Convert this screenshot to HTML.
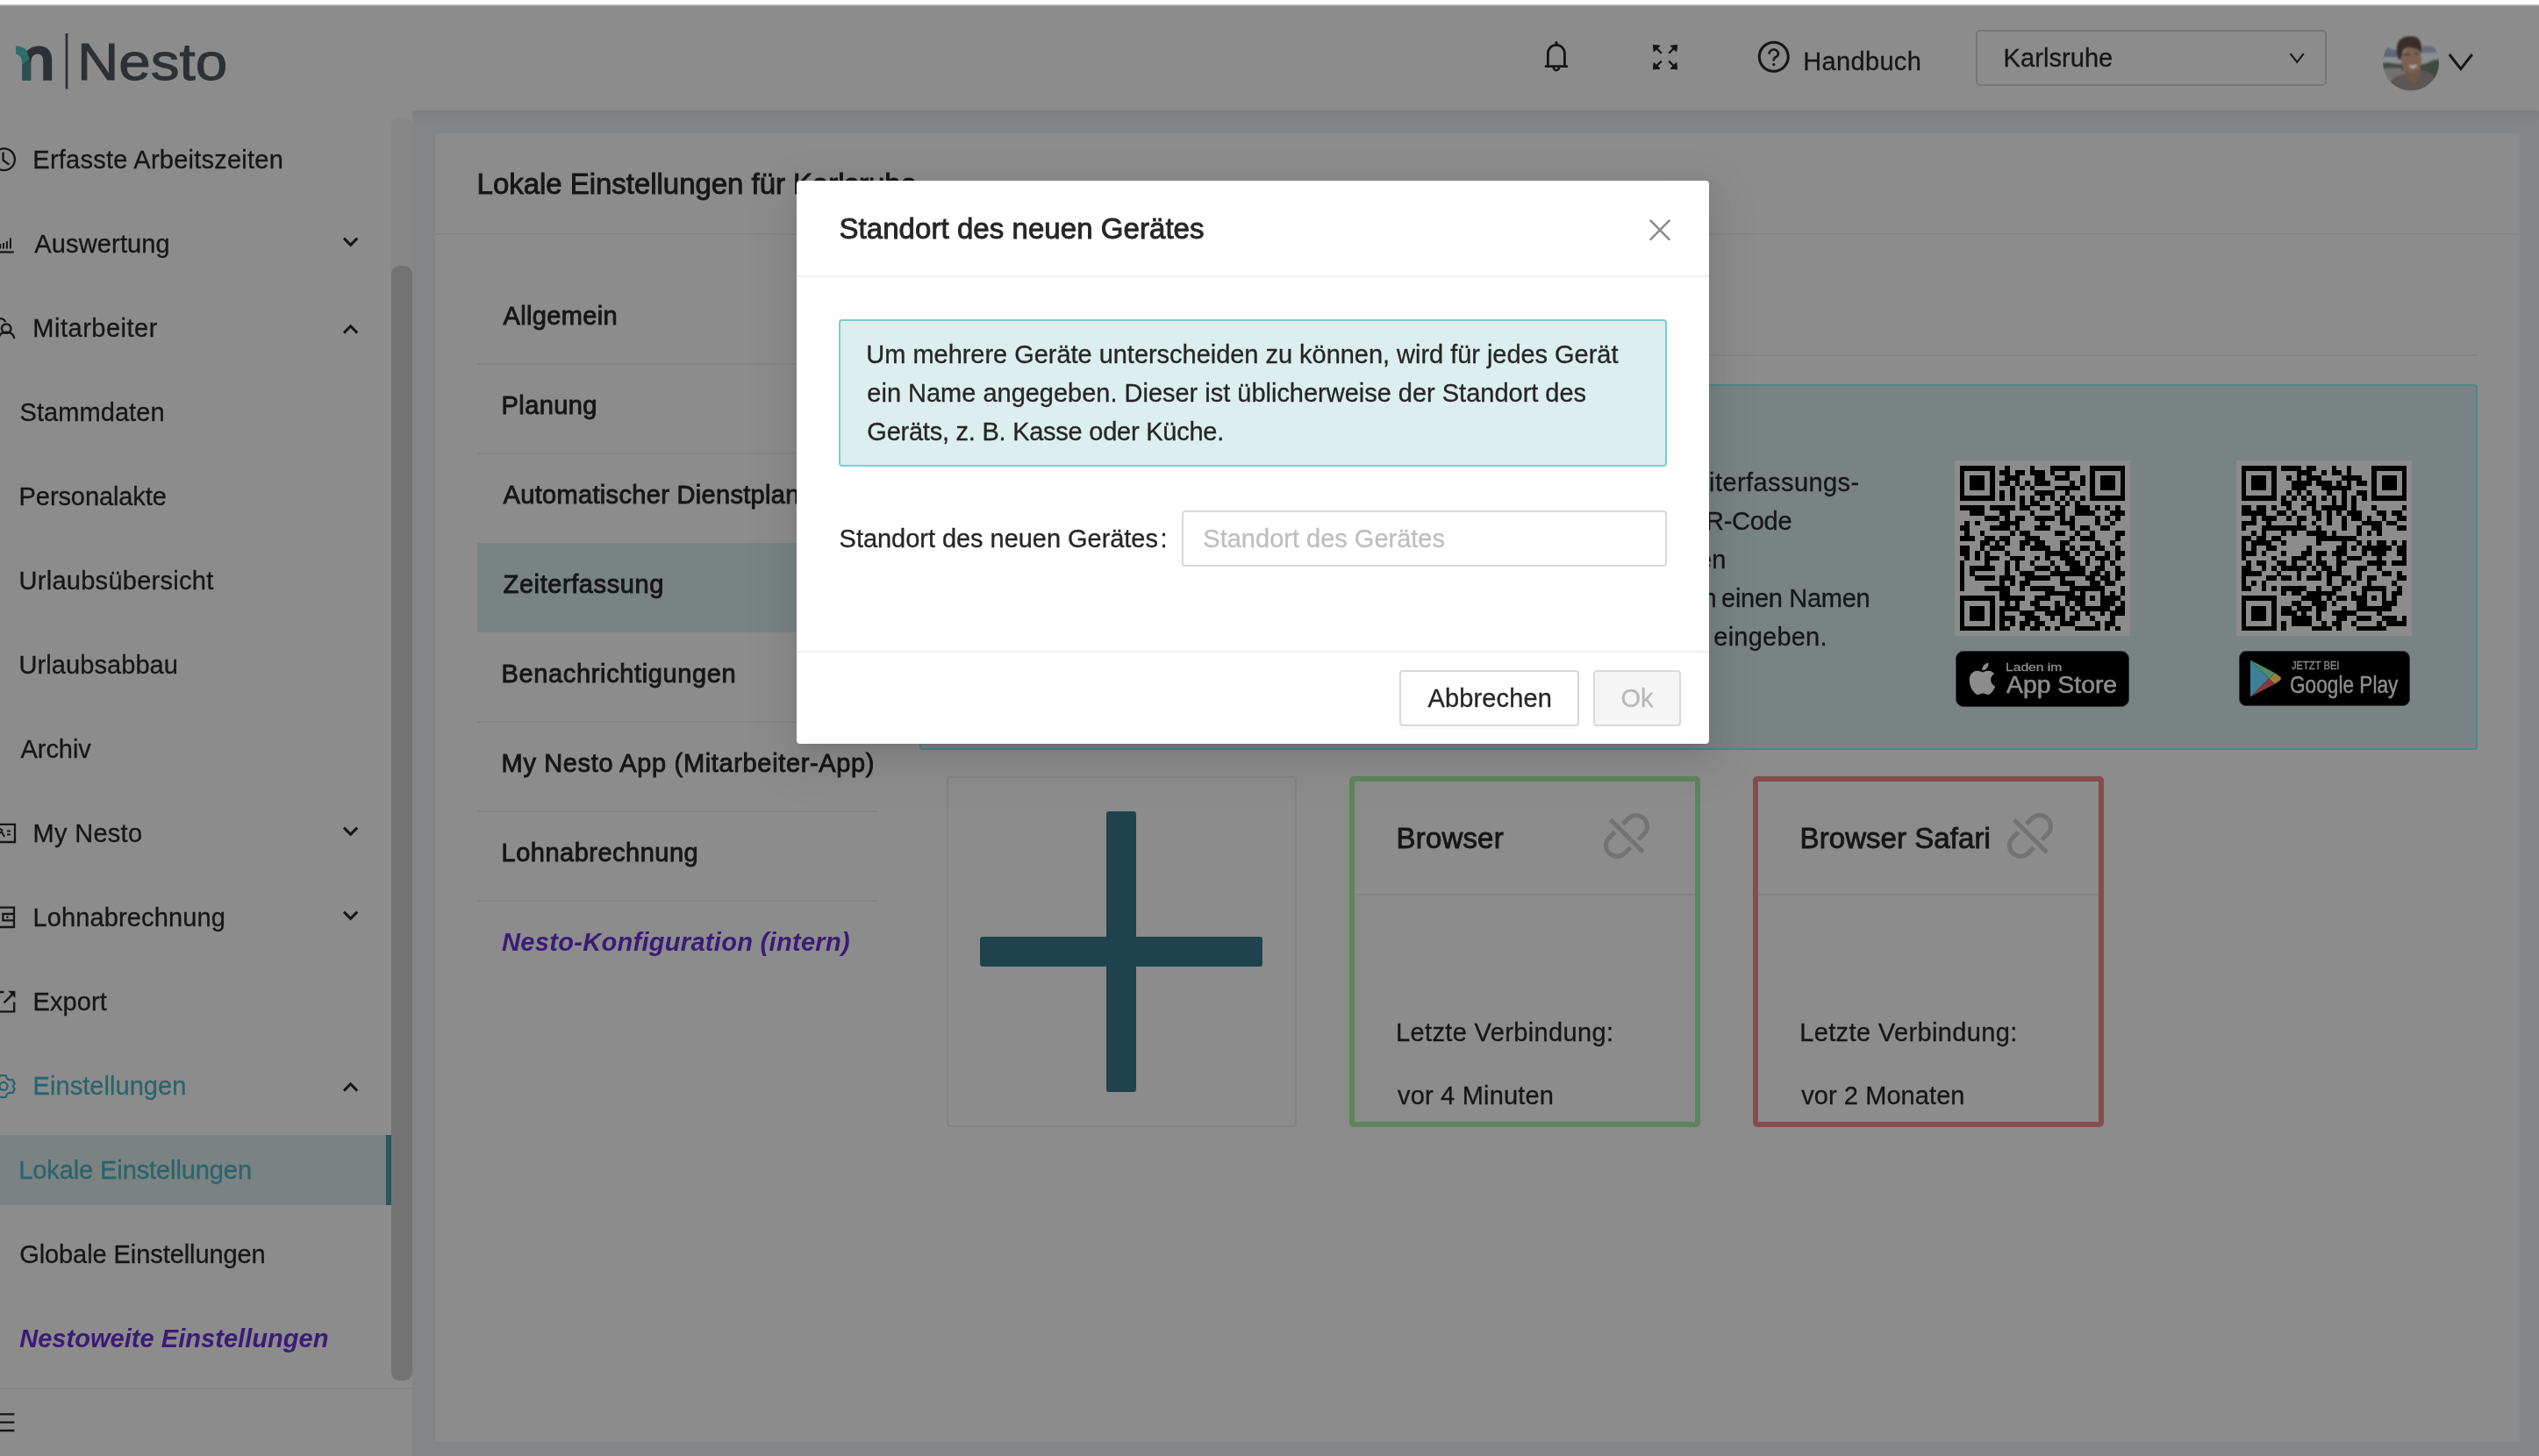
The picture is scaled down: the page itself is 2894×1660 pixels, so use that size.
<!DOCTYPE html>
<html lang="de">
<head>
<meta charset="utf-8">
<title>Nesto – Lokale Einstellungen</title>
<style>
html,body{margin:0;padding:0;}
body{width:2894px;height:1660px;position:relative;overflow:hidden;background:#848587;font-family:"Liberation Sans",sans-serif;}
.a{position:absolute;box-sizing:border-box;}
.t{position:absolute;line-height:1;white-space:pre;}
#hdr{left:0;top:0;width:2894px;height:126px;background:#8c8c8c;box-shadow:0 2px 14px rgba(0,0,0,.10);}
#side{left:0;top:0;width:470px;height:1660px;background:#8c8c8c;}
#card{left:496px;top:152px;width:2376px;height:1492px;background:#8c8c8c;border-radius:2px;}
.ln{position:absolute;background:#848484;height:2px;}
#modal{left:908px;top:206px;width:1040px;height:642px;background:#fff;border-radius:4px;
 box-shadow:0 6px 12px -8px rgba(0,0,0,.12),0 12px 32px 0 rgba(0,0,0,.08),0 18px 56px 16px rgba(0,0,0,.05);}
svg{position:absolute;left:0;top:0;overflow:visible;}
</style>
</head>
<body><div id="root" style="position:absolute;left:0;top:0;width:2894px;height:1660px;will-change:transform">
<!-- layout backgrounds -->
<div class="a" id="hdr"></div>
<div class="a" id="side"></div>
<div class="a" style="left:0;top:0;width:2894px;height:5px;background:#fdfdfd"></div>
<div class="a" style="left:0;top:5px;width:2894px;height:2px;background:linear-gradient(#d4d4d4,#9a9a9a)"></div>
<!-- sidebar pieces -->
<div class="a" style="left:0;top:1294px;width:446px;height:80px;background:#7a8283"></div>
<div class="a" style="left:440px;top:1294px;width:6px;height:80px;background:#27585f"></div>
<div class="a" style="left:446px;top:134px;width:24px;height:1440px;background:#878787;border-radius:9px"></div>
<div class="a" style="left:446px;top:303px;width:24px;height:1271px;background:#737373;border-radius:9px"></div>
<div class="a" style="left:0;top:1582px;width:470px;height:2px;background:#848484"></div>
<!-- content card -->
<div class="a" id="card"></div>
<div class="ln" style="left:496px;top:266px;width:2376px"></div>
<div class="a" style="left:544px;top:619px;width:456px;height:102px;background:#798384"></div>
<div class="ln" style="left:544px;top:414px;width:456px"></div>
<div class="ln" style="left:544px;top:516px;width:456px"></div>
<div class="ln" style="left:544px;top:822px;width:456px"></div>
<div class="ln" style="left:544px;top:924px;width:456px"></div>
<div class="ln" style="left:544px;top:1026px;width:456px"></div>
<div class="ln" style="left:1048px;top:404px;width:1776px"></div>
<!-- teal info box -->
<div class="a" style="left:1048px;top:438px;width:1776px;height:417px;background:#798384;border:2px solid #4d8785;border-radius:4px"></div>
<!-- QR white squares -->
<div class="a" style="left:2228px;top:525px;width:200px;height:200px;background:#8c8c8c"></div>
<div class="a" style="left:2549px;top:525px;width:200px;height:200px;background:#8c8c8c"></div>
<!-- store badges -->
<div class="a" style="left:2229px;top:742px;width:198px;height:63.5px;background:#000;border:1.5px solid #333;border-radius:9px"></div>
<div class="a" style="left:2551.5px;top:742.3px;width:195px;height:63px;background:#000;border:1.5px solid #333;border-radius:8px"></div>
<!-- device cards -->
<div class="a" style="left:1078.5px;top:885.2px;width:399.6px;height:399.4px;border:2px solid #838383;border-radius:4px"></div>
<div class="a" style="left:1261px;top:924.5px;width:34px;height:320px;background:#1f434d;border-radius:3px"></div>
<div class="a" style="left:1117px;top:1068px;width:322px;height:34px;background:#1f434d;border-radius:3px"></div>
<div class="a" style="left:1538px;top:885px;width:400px;height:399.5px;border:6px solid #5d855a;border-radius:5px"></div>
<div class="a" style="left:1998px;top:885px;width:400px;height:399.5px;border:6px solid #854d4d;border-radius:5px"></div>
<div class="ln" style="left:1544px;top:1019px;width:388px"></div>
<div class="ln" style="left:2004px;top:1019px;width:388px"></div>

<svg width="2894" height="1660" viewBox="0 0 2894 1660">
<path d="M2233.71 530.71h40.00v5.79h-40.00zM2285.14 530.71h5.71v5.79h-5.71zM2313.71 530.71h5.71v5.79h-5.71zM2336.57 530.71h34.29v5.79h-34.29zM2382.29 530.71h40.00v5.79h-40.00zM2233.71 536.43h5.71v5.79h-5.71zM2268.00 536.43h5.71v5.79h-5.71zM2279.43 536.43h11.43v5.79h-11.43zM2296.57 536.43h11.43v5.79h-11.43zM2313.71 536.43h17.14v5.79h-17.14zM2336.57 536.43h5.71v5.79h-5.71zM2353.71 536.43h5.71v5.79h-5.71zM2382.29 536.43h5.71v5.79h-5.71zM2416.57 536.43h5.71v5.79h-5.71zM2233.71 542.14h5.71v5.79h-5.71zM2245.14 542.14h17.14v5.79h-17.14zM2268.00 542.14h5.71v5.79h-5.71zM2285.14 542.14h17.14v5.79h-17.14zM2319.43 542.14h11.43v5.79h-11.43zM2342.29 542.14h17.14v5.79h-17.14zM2370.86 542.14h5.71v5.79h-5.71zM2382.29 542.14h5.71v5.79h-5.71zM2393.71 542.14h17.14v5.79h-17.14zM2416.57 542.14h5.71v5.79h-5.71zM2233.71 547.86h5.71v5.79h-5.71zM2245.14 547.86h17.14v5.79h-17.14zM2268.00 547.86h5.71v5.79h-5.71zM2279.43 547.86h11.43v5.79h-11.43zM2296.57 547.86h5.71v5.79h-5.71zM2308.00 547.86h5.71v5.79h-5.71zM2319.43 547.86h17.14v5.79h-17.14zM2359.43 547.86h5.71v5.79h-5.71zM2370.86 547.86h5.71v5.79h-5.71zM2382.29 547.86h5.71v5.79h-5.71zM2393.71 547.86h17.14v5.79h-17.14zM2416.57 547.86h5.71v5.79h-5.71zM2233.71 553.57h5.71v5.79h-5.71zM2245.14 553.57h17.14v5.79h-17.14zM2268.00 553.57h5.71v5.79h-5.71zM2290.86 553.57h5.71v5.79h-5.71zM2302.29 553.57h5.71v5.79h-5.71zM2313.71 553.57h5.71v5.79h-5.71zM2342.29 553.57h28.57v5.79h-28.57zM2382.29 553.57h5.71v5.79h-5.71zM2393.71 553.57h17.14v5.79h-17.14zM2416.57 553.57h5.71v5.79h-5.71zM2233.71 559.29h5.71v5.79h-5.71zM2268.00 559.29h5.71v5.79h-5.71zM2279.43 559.29h5.71v5.79h-5.71zM2290.86 559.29h5.71v5.79h-5.71zM2319.43 559.29h22.86v5.79h-22.86zM2353.71 559.29h5.71v5.79h-5.71zM2382.29 559.29h5.71v5.79h-5.71zM2416.57 559.29h5.71v5.79h-5.71zM2233.71 565.00h40.00v5.79h-40.00zM2279.43 565.00h5.71v5.79h-5.71zM2290.86 565.00h5.71v5.79h-5.71zM2302.29 565.00h5.71v5.79h-5.71zM2313.71 565.00h5.71v5.79h-5.71zM2325.14 565.00h5.71v5.79h-5.71zM2336.57 565.00h5.71v5.79h-5.71zM2348.00 565.00h5.71v5.79h-5.71zM2359.43 565.00h5.71v5.79h-5.71zM2370.86 565.00h5.71v5.79h-5.71zM2382.29 565.00h40.00v5.79h-40.00zM2302.29 570.71h5.71v5.79h-5.71zM2313.71 570.71h11.43v5.79h-11.43zM2342.29 570.71h5.71v5.79h-5.71zM2353.71 570.71h5.71v5.79h-5.71zM2365.14 570.71h5.71v5.79h-5.71zM2233.71 576.43h28.57v5.79h-28.57zM2268.00 576.43h28.57v5.79h-28.57zM2302.29 576.43h11.43v5.79h-11.43zM2325.14 576.43h11.43v5.79h-11.43zM2348.00 576.43h5.71v5.79h-5.71zM2365.14 576.43h17.14v5.79h-17.14zM2388.00 576.43h5.71v5.79h-5.71zM2399.43 576.43h5.71v5.79h-5.71zM2410.86 576.43h5.71v5.79h-5.71zM2245.14 582.14h17.14v5.79h-17.14zM2279.43 582.14h11.43v5.79h-11.43zM2313.71 582.14h5.71v5.79h-5.71zM2342.29 582.14h11.43v5.79h-11.43zM2365.14 582.14h22.86v5.79h-22.86zM2405.14 582.14h17.14v5.79h-17.14zM2262.29 587.86h17.14v5.79h-17.14zM2285.14 587.86h5.71v5.79h-5.71zM2296.57 587.86h11.43v5.79h-11.43zM2319.43 587.86h22.86v5.79h-22.86zM2348.00 587.86h5.71v5.79h-5.71zM2359.43 587.86h5.71v5.79h-5.71zM2388.00 587.86h5.71v5.79h-5.71zM2399.43 587.86h5.71v5.79h-5.71zM2410.86 587.86h5.71v5.79h-5.71zM2239.43 593.57h5.71v5.79h-5.71zM2250.86 593.57h5.71v5.79h-5.71zM2279.43 593.57h22.86v5.79h-22.86zM2325.14 593.57h5.71v5.79h-5.71zM2348.00 593.57h17.14v5.79h-17.14zM2388.00 593.57h5.71v5.79h-5.71zM2405.14 593.57h5.71v5.79h-5.71zM2233.71 599.29h11.43v5.79h-11.43zM2268.00 599.29h22.86v5.79h-22.86zM2296.57 599.29h5.71v5.79h-5.71zM2319.43 599.29h17.14v5.79h-17.14zM2359.43 599.29h5.71v5.79h-5.71zM2370.86 599.29h11.43v5.79h-11.43zM2393.71 599.29h11.43v5.79h-11.43zM2239.43 605.00h5.71v5.79h-5.71zM2256.57 605.00h5.71v5.79h-5.71zM2290.86 605.00h5.71v5.79h-5.71zM2302.29 605.00h11.43v5.79h-11.43zM2342.29 605.00h11.43v5.79h-11.43zM2365.14 605.00h5.71v5.79h-5.71zM2382.29 605.00h5.71v5.79h-5.71zM2410.86 605.00h11.43v5.79h-11.43zM2233.71 610.71h17.14v5.79h-17.14zM2262.29 610.71h11.43v5.79h-11.43zM2279.43 610.71h11.43v5.79h-11.43zM2308.00 610.71h17.14v5.79h-17.14zM2359.43 610.71h5.71v5.79h-5.71zM2370.86 610.71h17.14v5.79h-17.14zM2410.86 610.71h5.71v5.79h-5.71zM2256.57 616.43h11.43v5.79h-11.43zM2273.71 616.43h5.71v5.79h-5.71zM2285.14 616.43h5.71v5.79h-5.71zM2302.29 616.43h11.43v5.79h-11.43zM2319.43 616.43h11.43v5.79h-11.43zM2348.00 616.43h11.43v5.79h-11.43zM2388.00 616.43h5.71v5.79h-5.71zM2405.14 616.43h5.71v5.79h-5.71zM2233.71 622.14h11.43v5.79h-11.43zM2256.57 622.14h5.71v5.79h-5.71zM2268.00 622.14h17.14v5.79h-17.14zM2302.29 622.14h5.71v5.79h-5.71zM2313.71 622.14h22.86v5.79h-22.86zM2348.00 622.14h5.71v5.79h-5.71zM2359.43 622.14h5.71v5.79h-5.71zM2370.86 622.14h11.43v5.79h-11.43zM2388.00 622.14h11.43v5.79h-11.43zM2410.86 622.14h5.71v5.79h-5.71zM2233.71 627.86h11.43v5.79h-11.43zM2250.86 627.86h5.71v5.79h-5.71zM2262.29 627.86h5.71v5.79h-5.71zM2285.14 627.86h5.71v5.79h-5.71zM2330.86 627.86h28.57v5.79h-28.57zM2365.14 627.86h5.71v5.79h-5.71zM2382.29 627.86h5.71v5.79h-5.71zM2399.43 627.86h5.71v5.79h-5.71zM2410.86 627.86h11.43v5.79h-11.43zM2239.43 633.57h5.71v5.79h-5.71zM2250.86 633.57h5.71v5.79h-5.71zM2262.29 633.57h17.14v5.79h-17.14zM2290.86 633.57h17.14v5.79h-17.14zM2319.43 633.57h5.71v5.79h-5.71zM2330.86 633.57h5.71v5.79h-5.71zM2348.00 633.57h17.14v5.79h-17.14zM2376.57 633.57h5.71v5.79h-5.71zM2388.00 633.57h17.14v5.79h-17.14zM2410.86 633.57h5.71v5.79h-5.71zM2233.71 639.29h5.71v5.79h-5.71zM2262.29 639.29h5.71v5.79h-5.71zM2285.14 639.29h5.71v5.79h-5.71zM2296.57 639.29h5.71v5.79h-5.71zM2313.71 639.29h5.71v5.79h-5.71zM2336.57 639.29h5.71v5.79h-5.71zM2353.71 639.29h17.14v5.79h-17.14zM2376.57 639.29h5.71v5.79h-5.71zM2393.71 639.29h5.71v5.79h-5.71zM2405.14 639.29h5.71v5.79h-5.71zM2233.71 645.00h5.71v5.79h-5.71zM2245.14 645.00h28.57v5.79h-28.57zM2285.14 645.00h5.71v5.79h-5.71zM2296.57 645.00h5.71v5.79h-5.71zM2319.43 645.00h17.14v5.79h-17.14zM2342.29 645.00h5.71v5.79h-5.71zM2359.43 645.00h17.14v5.79h-17.14zM2388.00 645.00h11.43v5.79h-11.43zM2410.86 645.00h5.71v5.79h-5.71zM2233.71 650.71h5.71v5.79h-5.71zM2245.14 650.71h5.71v5.79h-5.71zM2285.14 650.71h5.71v5.79h-5.71zM2302.29 650.71h17.14v5.79h-17.14zM2336.57 650.71h40.00v5.79h-40.00zM2382.29 650.71h11.43v5.79h-11.43zM2399.43 650.71h5.71v5.79h-5.71zM2410.86 650.71h11.43v5.79h-11.43zM2233.71 656.43h5.71v5.79h-5.71zM2250.86 656.43h22.86v5.79h-22.86zM2279.43 656.43h17.14v5.79h-17.14zM2308.00 656.43h28.57v5.79h-28.57zM2348.00 656.43h5.71v5.79h-5.71zM2376.57 656.43h11.43v5.79h-11.43zM2393.71 656.43h11.43v5.79h-11.43zM2410.86 656.43h5.71v5.79h-5.71zM2233.71 662.14h5.71v5.79h-5.71zM2279.43 662.14h5.71v5.79h-5.71zM2290.86 662.14h5.71v5.79h-5.71zM2302.29 662.14h11.43v5.79h-11.43zM2348.00 662.14h17.14v5.79h-17.14zM2382.29 662.14h11.43v5.79h-11.43zM2399.43 662.14h11.43v5.79h-11.43zM2233.71 667.86h5.71v5.79h-5.71zM2262.29 667.86h28.57v5.79h-28.57zM2302.29 667.86h5.71v5.79h-5.71zM2313.71 667.86h28.57v5.79h-28.57zM2359.43 667.86h40.00v5.79h-40.00zM2416.57 667.86h5.71v5.79h-5.71zM2279.43 673.57h11.43v5.79h-11.43zM2330.86 673.57h34.29v5.79h-34.29zM2370.86 673.57h5.71v5.79h-5.71zM2393.71 673.57h5.71v5.79h-5.71zM2405.14 673.57h5.71v5.79h-5.71zM2416.57 673.57h5.71v5.79h-5.71zM2233.71 679.29h40.00v5.79h-40.00zM2279.43 679.29h28.57v5.79h-28.57zM2319.43 679.29h17.14v5.79h-17.14zM2353.71 679.29h22.86v5.79h-22.86zM2382.29 679.29h5.71v5.79h-5.71zM2393.71 679.29h22.86v5.79h-22.86zM2233.71 685.00h5.71v5.79h-5.71zM2268.00 685.00h5.71v5.79h-5.71zM2285.14 685.00h5.71v5.79h-5.71zM2296.57 685.00h5.71v5.79h-5.71zM2313.71 685.00h11.43v5.79h-11.43zM2342.29 685.00h5.71v5.79h-5.71zM2353.71 685.00h5.71v5.79h-5.71zM2365.14 685.00h11.43v5.79h-11.43zM2393.71 685.00h17.14v5.79h-17.14zM2416.57 685.00h5.71v5.79h-5.71zM2233.71 690.71h5.71v5.79h-5.71zM2245.14 690.71h17.14v5.79h-17.14zM2268.00 690.71h5.71v5.79h-5.71zM2279.43 690.71h22.86v5.79h-22.86zM2319.43 690.71h17.14v5.79h-17.14zM2342.29 690.71h11.43v5.79h-11.43zM2359.43 690.71h5.71v5.79h-5.71zM2370.86 690.71h34.29v5.79h-34.29zM2410.86 690.71h11.43v5.79h-11.43zM2233.71 696.43h5.71v5.79h-5.71zM2245.14 696.43h17.14v5.79h-17.14zM2268.00 696.43h5.71v5.79h-5.71zM2279.43 696.43h5.71v5.79h-5.71zM2302.29 696.43h17.14v5.79h-17.14zM2330.86 696.43h22.86v5.79h-22.86zM2365.14 696.43h5.71v5.79h-5.71zM2376.57 696.43h5.71v5.79h-5.71zM2393.71 696.43h5.71v5.79h-5.71zM2405.14 696.43h17.14v5.79h-17.14zM2233.71 702.14h5.71v5.79h-5.71zM2245.14 702.14h17.14v5.79h-17.14zM2268.00 702.14h5.71v5.79h-5.71zM2279.43 702.14h17.14v5.79h-17.14zM2308.00 702.14h17.14v5.79h-17.14zM2336.57 702.14h5.71v5.79h-5.71zM2348.00 702.14h5.71v5.79h-5.71zM2359.43 702.14h11.43v5.79h-11.43zM2382.29 702.14h5.71v5.79h-5.71zM2405.14 702.14h5.71v5.79h-5.71zM2233.71 707.86h5.71v5.79h-5.71zM2268.00 707.86h5.71v5.79h-5.71zM2279.43 707.86h5.71v5.79h-5.71zM2290.86 707.86h5.71v5.79h-5.71zM2302.29 707.86h11.43v5.79h-11.43zM2319.43 707.86h11.43v5.79h-11.43zM2348.00 707.86h17.14v5.79h-17.14zM2388.00 707.86h5.71v5.79h-5.71zM2399.43 707.86h11.43v5.79h-11.43zM2233.71 713.57h40.00v5.79h-40.00zM2279.43 713.57h11.43v5.79h-11.43zM2302.29 713.57h5.71v5.79h-5.71zM2313.71 713.57h11.43v5.79h-11.43zM2330.86 713.57h5.71v5.79h-5.71zM2342.29 713.57h5.71v5.79h-5.71zM2365.14 713.57h28.57v5.79h-28.57zM2399.43 713.57h5.71v5.79h-5.71zM2410.86 713.57h5.71v5.79h-5.71z" fill="#000" shape-rendering="crispEdges"/>
<path d="M2554.71 530.71h40.00v5.79h-40.00zM2600.43 530.71h22.86v5.79h-22.86zM2629.00 530.71h11.43v5.79h-11.43zM2657.57 530.71h5.71v5.79h-5.71zM2674.71 530.71h5.71v5.79h-5.71zM2703.29 530.71h40.00v5.79h-40.00zM2554.71 536.43h5.71v5.79h-5.71zM2589.00 536.43h5.71v5.79h-5.71zM2617.57 536.43h17.14v5.79h-17.14zM2646.14 536.43h5.71v5.79h-5.71zM2657.57 536.43h11.43v5.79h-11.43zM2674.71 536.43h5.71v5.79h-5.71zM2703.29 536.43h5.71v5.79h-5.71zM2737.57 536.43h5.71v5.79h-5.71zM2554.71 542.14h5.71v5.79h-5.71zM2566.14 542.14h17.14v5.79h-17.14zM2589.00 542.14h5.71v5.79h-5.71zM2606.14 542.14h5.71v5.79h-5.71zM2617.57 542.14h5.71v5.79h-5.71zM2629.00 542.14h17.14v5.79h-17.14zM2669.00 542.14h22.86v5.79h-22.86zM2703.29 542.14h5.71v5.79h-5.71zM2714.71 542.14h17.14v5.79h-17.14zM2737.57 542.14h5.71v5.79h-5.71zM2554.71 547.86h5.71v5.79h-5.71zM2566.14 547.86h17.14v5.79h-17.14zM2589.00 547.86h5.71v5.79h-5.71zM2611.86 547.86h22.86v5.79h-22.86zM2640.43 547.86h17.14v5.79h-17.14zM2663.29 547.86h5.71v5.79h-5.71zM2674.71 547.86h5.71v5.79h-5.71zM2686.14 547.86h11.43v5.79h-11.43zM2703.29 547.86h5.71v5.79h-5.71zM2714.71 547.86h17.14v5.79h-17.14zM2737.57 547.86h5.71v5.79h-5.71zM2554.71 553.57h5.71v5.79h-5.71zM2566.14 553.57h17.14v5.79h-17.14zM2589.00 553.57h5.71v5.79h-5.71zM2611.86 553.57h17.14v5.79h-17.14zM2646.14 553.57h34.29v5.79h-34.29zM2703.29 553.57h5.71v5.79h-5.71zM2714.71 553.57h17.14v5.79h-17.14zM2737.57 553.57h5.71v5.79h-5.71zM2554.71 559.29h5.71v5.79h-5.71zM2589.00 559.29h5.71v5.79h-5.71zM2606.14 559.29h5.71v5.79h-5.71zM2617.57 559.29h5.71v5.79h-5.71zM2629.00 559.29h5.71v5.79h-5.71zM2651.86 559.29h5.71v5.79h-5.71zM2669.00 559.29h5.71v5.79h-5.71zM2686.14 559.29h11.43v5.79h-11.43zM2703.29 559.29h5.71v5.79h-5.71zM2737.57 559.29h5.71v5.79h-5.71zM2554.71 565.00h40.00v5.79h-40.00zM2600.43 565.00h5.71v5.79h-5.71zM2611.86 565.00h5.71v5.79h-5.71zM2623.29 565.00h5.71v5.79h-5.71zM2634.71 565.00h5.71v5.79h-5.71zM2646.14 565.00h5.71v5.79h-5.71zM2657.57 565.00h5.71v5.79h-5.71zM2669.00 565.00h5.71v5.79h-5.71zM2680.43 565.00h5.71v5.79h-5.71zM2691.86 565.00h5.71v5.79h-5.71zM2703.29 565.00h40.00v5.79h-40.00zM2600.43 570.71h11.43v5.79h-11.43zM2629.00 570.71h11.43v5.79h-11.43zM2657.57 570.71h5.71v5.79h-5.71zM2669.00 570.71h5.71v5.79h-5.71zM2680.43 570.71h5.71v5.79h-5.71zM2554.71 576.43h11.43v5.79h-11.43zM2571.86 576.43h11.43v5.79h-11.43zM2589.00 576.43h5.71v5.79h-5.71zM2606.14 576.43h5.71v5.79h-5.71zM2623.29 576.43h5.71v5.79h-5.71zM2634.71 576.43h5.71v5.79h-5.71zM2646.14 576.43h28.57v5.79h-28.57zM2680.43 576.43h5.71v5.79h-5.71zM2703.29 576.43h5.71v5.79h-5.71zM2737.57 576.43h5.71v5.79h-5.71zM2554.71 582.14h28.57v5.79h-28.57zM2594.71 582.14h11.43v5.79h-11.43zM2611.86 582.14h5.71v5.79h-5.71zM2634.71 582.14h11.43v5.79h-11.43zM2651.86 582.14h5.71v5.79h-5.71zM2663.29 582.14h5.71v5.79h-5.71zM2674.71 582.14h17.14v5.79h-17.14zM2709.00 582.14h11.43v5.79h-11.43zM2726.14 582.14h11.43v5.79h-11.43zM2566.14 587.86h5.71v5.79h-5.71zM2577.57 587.86h17.14v5.79h-17.14zM2606.14 587.86h5.71v5.79h-5.71zM2617.57 587.86h11.43v5.79h-11.43zM2640.43 587.86h5.71v5.79h-5.71zM2651.86 587.86h5.71v5.79h-5.71zM2669.00 587.86h5.71v5.79h-5.71zM2680.43 587.86h11.43v5.79h-11.43zM2697.57 587.86h5.71v5.79h-5.71zM2714.71 587.86h5.71v5.79h-5.71zM2731.86 587.86h11.43v5.79h-11.43zM2554.71 593.57h17.14v5.79h-17.14zM2583.29 593.57h5.71v5.79h-5.71zM2617.57 593.57h5.71v5.79h-5.71zM2634.71 593.57h5.71v5.79h-5.71zM2651.86 593.57h5.71v5.79h-5.71zM2669.00 593.57h5.71v5.79h-5.71zM2691.86 593.57h22.86v5.79h-22.86zM2720.43 593.57h11.43v5.79h-11.43zM2554.71 599.29h5.71v5.79h-5.71zM2577.57 599.29h51.43v5.79h-51.43zM2640.43 599.29h5.71v5.79h-5.71zM2669.00 599.29h5.71v5.79h-5.71zM2686.14 599.29h5.71v5.79h-5.71zM2703.29 599.29h11.43v5.79h-11.43zM2731.86 599.29h11.43v5.79h-11.43zM2566.14 605.00h5.71v5.79h-5.71zM2577.57 605.00h5.71v5.79h-5.71zM2600.43 605.00h5.71v5.79h-5.71zM2611.86 605.00h5.71v5.79h-5.71zM2629.00 605.00h22.86v5.79h-22.86zM2657.57 605.00h5.71v5.79h-5.71zM2686.14 605.00h5.71v5.79h-5.71zM2697.57 605.00h5.71v5.79h-5.71zM2709.00 605.00h5.71v5.79h-5.71zM2554.71 610.71h11.43v5.79h-11.43zM2571.86 610.71h11.43v5.79h-11.43zM2589.00 610.71h11.43v5.79h-11.43zM2640.43 610.71h45.71v5.79h-45.71zM2554.71 616.43h5.71v5.79h-5.71zM2566.14 616.43h22.86v5.79h-22.86zM2600.43 616.43h5.71v5.79h-5.71zM2640.43 616.43h5.71v5.79h-5.71zM2669.00 616.43h5.71v5.79h-5.71zM2686.14 616.43h5.71v5.79h-5.71zM2697.57 616.43h5.71v5.79h-5.71zM2709.00 616.43h11.43v5.79h-11.43zM2726.14 616.43h5.71v5.79h-5.71zM2737.57 616.43h5.71v5.79h-5.71zM2554.71 622.14h5.71v5.79h-5.71zM2566.14 622.14h5.71v5.79h-5.71zM2583.29 622.14h11.43v5.79h-11.43zM2629.00 622.14h5.71v5.79h-5.71zM2663.29 622.14h11.43v5.79h-11.43zM2680.43 622.14h5.71v5.79h-5.71zM2691.86 622.14h34.29v5.79h-34.29zM2731.86 622.14h11.43v5.79h-11.43zM2554.71 627.86h17.14v5.79h-17.14zM2577.57 627.86h5.71v5.79h-5.71zM2600.43 627.86h5.71v5.79h-5.71zM2623.29 627.86h11.43v5.79h-11.43zM2640.43 627.86h11.43v5.79h-11.43zM2657.57 627.86h17.14v5.79h-17.14zM2691.86 627.86h5.71v5.79h-5.71zM2703.29 627.86h17.14v5.79h-17.14zM2731.86 627.86h11.43v5.79h-11.43zM2554.71 633.57h5.71v5.79h-5.71zM2589.00 633.57h5.71v5.79h-5.71zM2611.86 633.57h17.14v5.79h-17.14zM2640.43 633.57h5.71v5.79h-5.71zM2663.29 633.57h5.71v5.79h-5.71zM2674.71 633.57h17.14v5.79h-17.14zM2709.00 633.57h5.71v5.79h-5.71zM2737.57 633.57h5.71v5.79h-5.71zM2560.43 639.29h5.71v5.79h-5.71zM2571.86 639.29h11.43v5.79h-11.43zM2594.71 639.29h11.43v5.79h-11.43zM2611.86 639.29h5.71v5.79h-5.71zM2629.00 639.29h5.71v5.79h-5.71zM2640.43 639.29h11.43v5.79h-11.43zM2663.29 639.29h11.43v5.79h-11.43zM2697.57 639.29h22.86v5.79h-22.86zM2726.14 639.29h17.14v5.79h-17.14zM2554.71 645.00h11.43v5.79h-11.43zM2577.57 645.00h5.71v5.79h-5.71zM2589.00 645.00h5.71v5.79h-5.71zM2600.43 645.00h28.57v5.79h-28.57zM2634.71 645.00h5.71v5.79h-5.71zM2646.14 645.00h11.43v5.79h-11.43zM2663.29 645.00h5.71v5.79h-5.71zM2686.14 645.00h11.43v5.79h-11.43zM2709.00 645.00h5.71v5.79h-5.71zM2554.71 650.71h22.86v5.79h-22.86zM2594.71 650.71h5.71v5.79h-5.71zM2617.57 650.71h5.71v5.79h-5.71zM2640.43 650.71h5.71v5.79h-5.71zM2651.86 650.71h17.14v5.79h-17.14zM2686.14 650.71h5.71v5.79h-5.71zM2714.71 650.71h11.43v5.79h-11.43zM2731.86 650.71h5.71v5.79h-5.71zM2554.71 656.43h5.71v5.79h-5.71zM2583.29 656.43h11.43v5.79h-11.43zM2600.43 656.43h11.43v5.79h-11.43zM2617.57 656.43h5.71v5.79h-5.71zM2629.00 656.43h17.14v5.79h-17.14zM2651.86 656.43h5.71v5.79h-5.71zM2669.00 656.43h11.43v5.79h-11.43zM2686.14 656.43h5.71v5.79h-5.71zM2697.57 656.43h11.43v5.79h-11.43zM2731.86 656.43h11.43v5.79h-11.43zM2554.71 662.14h5.71v5.79h-5.71zM2566.14 662.14h5.71v5.79h-5.71zM2577.57 662.14h5.71v5.79h-5.71zM2651.86 662.14h5.71v5.79h-5.71zM2669.00 662.14h5.71v5.79h-5.71zM2680.43 662.14h5.71v5.79h-5.71zM2697.57 662.14h5.71v5.79h-5.71zM2726.14 662.14h5.71v5.79h-5.71zM2554.71 667.86h11.43v5.79h-11.43zM2577.57 667.86h5.71v5.79h-5.71zM2589.00 667.86h5.71v5.79h-5.71zM2600.43 667.86h28.57v5.79h-28.57zM2640.43 667.86h5.71v5.79h-5.71zM2657.57 667.86h11.43v5.79h-11.43zM2691.86 667.86h28.57v5.79h-28.57zM2731.86 667.86h5.71v5.79h-5.71zM2600.43 673.57h5.71v5.79h-5.71zM2611.86 673.57h11.43v5.79h-11.43zM2629.00 673.57h34.29v5.79h-34.29zM2680.43 673.57h5.71v5.79h-5.71zM2691.86 673.57h5.71v5.79h-5.71zM2714.71 673.57h5.71v5.79h-5.71zM2726.14 673.57h11.43v5.79h-11.43zM2554.71 679.29h40.00v5.79h-40.00zM2623.29 679.29h22.86v5.79h-22.86zM2651.86 679.29h5.71v5.79h-5.71zM2663.29 679.29h11.43v5.79h-11.43zM2680.43 679.29h17.14v5.79h-17.14zM2703.29 679.29h5.71v5.79h-5.71zM2714.71 679.29h5.71v5.79h-5.71zM2726.14 679.29h5.71v5.79h-5.71zM2554.71 685.00h5.71v5.79h-5.71zM2589.00 685.00h5.71v5.79h-5.71zM2611.86 685.00h11.43v5.79h-11.43zM2634.71 685.00h17.14v5.79h-17.14zM2657.57 685.00h5.71v5.79h-5.71zM2686.14 685.00h11.43v5.79h-11.43zM2714.71 685.00h17.14v5.79h-17.14zM2554.71 690.71h5.71v5.79h-5.71zM2566.14 690.71h17.14v5.79h-17.14zM2589.00 690.71h5.71v5.79h-5.71zM2600.43 690.71h11.43v5.79h-11.43zM2617.57 690.71h17.14v5.79h-17.14zM2640.43 690.71h11.43v5.79h-11.43zM2669.00 690.71h5.71v5.79h-5.71zM2686.14 690.71h40.00v5.79h-40.00zM2554.71 696.43h5.71v5.79h-5.71zM2566.14 696.43h17.14v5.79h-17.14zM2589.00 696.43h5.71v5.79h-5.71zM2600.43 696.43h17.14v5.79h-17.14zM2623.29 696.43h5.71v5.79h-5.71zM2640.43 696.43h5.71v5.79h-5.71zM2657.57 696.43h28.57v5.79h-28.57zM2709.00 696.43h5.71v5.79h-5.71zM2554.71 702.14h5.71v5.79h-5.71zM2566.14 702.14h17.14v5.79h-17.14zM2589.00 702.14h5.71v5.79h-5.71zM2611.86 702.14h22.86v5.79h-22.86zM2640.43 702.14h5.71v5.79h-5.71zM2663.29 702.14h11.43v5.79h-11.43zM2686.14 702.14h17.14v5.79h-17.14zM2714.71 702.14h17.14v5.79h-17.14zM2737.57 702.14h5.71v5.79h-5.71zM2554.71 707.86h5.71v5.79h-5.71zM2589.00 707.86h5.71v5.79h-5.71zM2600.43 707.86h5.71v5.79h-5.71zM2611.86 707.86h22.86v5.79h-22.86zM2646.14 707.86h5.71v5.79h-5.71zM2657.57 707.86h11.43v5.79h-11.43zM2680.43 707.86h5.71v5.79h-5.71zM2709.00 707.86h5.71v5.79h-5.71zM2720.43 707.86h22.86v5.79h-22.86zM2554.71 713.57h40.00v5.79h-40.00zM2600.43 713.57h5.71v5.79h-5.71zM2634.71 713.57h22.86v5.79h-22.86zM2663.29 713.57h5.71v5.79h-5.71zM2686.14 713.57h34.29v5.79h-34.29z" fill="#000" shape-rendering="crispEdges"/>
<!-- logo -->
<g>
 <path d="M18 52.6 C29.5 52.6 35.2 60.5 35.2 72 L35.2 91.7 L25.2 91.7 L25.2 72.5 C25.2 66 22.6 62.3 18 61.4 Z" fill="#2f6c6c"/>
 <path d="M25.2 74 L35.2 66 L35.2 91.7 L25.2 91.7 Z" fill="#2c4f52"/>
 <path d="M30.5 58.5 C33.5 54.8 38.5 52.5 44.5 52.5 C54 52.5 59.2 58.2 59.2 68.5 L59.2 91.7 L49.2 91.7 L49.2 69.5 C49.2 64.2 47 61.4 42.8 61.4 C38.6 61.4 35.2 64.8 35.2 72 Z" fill="#2d3136"/>
 <rect x="74.6" y="38" width="2.8" height="63.5" fill="#2d3136"/>
</g>
<!-- sidebar icons -->
<g fill="none" stroke="#161616" stroke-width="2.3" stroke-linecap="butt" stroke-linejoin="miter">
 <!-- clock -->
 <circle cx="4.5" cy="181.7" r="12.4"/>
 <path d="M3.6 173.5 L3.6 182.6 L10.4 187.6"/>
 <!-- bar chart -->
 <path d="M-9 287.4 L15.8 287.4" stroke-width="2.2"/>
 <path d="M0.3 283.6 L0.3 278 M4 283.6 L4 277 M7.9 283.6 L7.9 275 M11.9 283.6 L11.9 271.3" stroke-width="2"/>
 <!-- team -->
 <circle cx="7.2" cy="374.6" r="5.3"/>
 <path d="M-1.8 386.2 C-1 380.6 3 378.6 7.2 378.6 C11.4 378.6 15.6 380.8 16.4 386.2"/>
 <path d="M-2 363.4 C2 362.4 5.4 364.2 6.2 367.2"/>
 <!-- idcard -->
 <path d="M-9 939.8 L17 939.8 L17 960 L-9 960"/>
 <path d="M8 947.6 L12 947.6 M8 951.6 L12 951.6" stroke-width="2"/>
 <path d="M-2 952.8 C-1.5 950 1 948.8 2.8 948.8 M-1 945 A3 3 0 0 1 2.4 948.2 M2.4 949.4 L5.2 954" stroke-width="2"/>
 <!-- wallet -->
 <path d="M-9 1034.6 L16 1034.6 L16 1057 L-9 1057"/>
 <path d="M16 1042 L3.4 1042 L3.4 1049.4 L16 1049.4" />
 <circle cx="8.4" cy="1045.7" r="0.9" fill="#161616" stroke-width="1"/>
 <!-- export -->
 <path d="M4.5 1131 L-9 1131 M16.2 1142.4 L16.2 1153.4 L-9 1153.4"/>
 <path d="M4.6 1143.4 L14.4 1133.4"/>
 <path d="M9.2 1129.8 L17.4 1129.8 L17.4 1138 Z" fill="#161616" stroke="none"/>
 <!-- menu fold -->
 <path d="M-8 1612.4 L16.4 1612.4 M-8 1621.6 L16.4 1621.6 M-8 1631 L16.4 1631" stroke-width="2.4"/>
</g>
<!-- gear (teal) -->
<g fill="none" stroke="#2a646c" stroke-width="2.4" transform="translate(4,1238.4) scale(0.93) translate(-4,-1238.4)">
 <circle cx="4" cy="1238.4" r="4.9"/>
 <path d="M-2.2 1226.6 L1.2 1225.2 L6.8 1225.2 L8.2 1229 L11.4 1230.8 L15.4 1230.2 L17.6 1235.4 L15.4 1238.4 L17.6 1241.6 L15.4 1246.6 L11.4 1246.2 L8.2 1248 L6.8 1251.8 L1.2 1251.8 L-2.2 1250.4" stroke-linejoin="round"/>
</g>
<!-- sidebar chevrons -->
<g fill="none" stroke="#161616" stroke-width="3" stroke-linecap="butt" stroke-linejoin="miter">
 <path d="M392 271.6 L399.6 279.4 L407.2 271.6"/>
 <path d="M392 379.6 L399.6 371.8 L407.2 379.6"/>
 <path d="M392 943.6 L399.6 951.4 L407.2 943.6"/>
 <path d="M392 1039.6 L399.6 1047.4 L407.2 1039.6"/>
 <path d="M392 1243.6 L399.6 1235.8 L407.2 1243.6"/>
</g>
<!-- header icons -->
<g transform="translate(1753.9,44.2) scale(0.0390625)" fill="#161616">
 <path d="M816 768h-24V428c0-141.100-104.300-257.700-240-277.100V112c0-22.100-17.900-40-40-40s-40 17.900-40 40v38.900c-135.700 19.400-240 136-240 277.100v340h-24c-17.700 0-32 14.300-32 32v32c0 4.400 3.600 8 8 8h216c0 61.800 50.200 112 112 112s112-50.200 112-112h216c4.400 0 8-3.600 8-8v-32c0-17.700-14.300-32-32-32zM512 888c-26.500 0-48-21.500-48-48h96c0 26.500-21.500 48-48 48zM304 768V428c0-55.600 21.600-107.800 60.900-147.100S456.400 220 512 220c55.600 0 107.800 21.600 147.100 60.900S720 372.400 720 428v340H304z"/>
</g>
<g fill="#161616" stroke="#161616" stroke-width="2.3">
 <path d="M1887.4 54.4 L1893.8 60.8 M1908.6 54.4 L1902.2 60.8 M1887.4 76 L1893.8 69.6 M1908.6 76 L1902.2 69.6" fill="none"/>
 <path d="M1884.4 51.4 L1892 52.2 L1885.2 59 Z M1911.6 51.4 L1904 52.2 L1910.8 59 Z M1884.4 79 L1892 78.200 L1885.2 71.400 Z M1911.6 79 L1904 78.200 L1910.8 71.400 Z" stroke-width="1" stroke-linejoin="round"/>
</g>
<g transform="translate(2001.2,44.2) scale(0.0402)" fill="#161616">
 <path d="M512 64C264.600 64 64 264.600 64 512s200.600 448 448 448 448-200.600 448-448S759.400 64 512 64zm0 820c-205.400 0-372-166.600-372-372s166.600-372 372-372 372 166.600 372 372-166.600 372-372 372z"/>
 <path d="M623.600 316.700C593.600 290.400 554 276 512 276s-81.600 14.500-111.600 40.700C369.200 344 352 380.700 352 420v7.600c0 4.400 3.600 8 8 8h48c4.400 0 8-3.600 8-8V420c0-44.100 43.100-80 96-80s96 35.900 96 80c0 31.100-22 59.600-56.100 72.700-21.200 8.100-39.200 22.300-52.100 40.900-13.100 19-19.900 41.800-19.900 64.900V620c0 4.400 3.600 8 8 8h48c4.400 0 8-3.600 8-8v-22.700a48.300 48.300 0 0 1 30.900-44.800c59-22.700 97.100-74.700 97.100-132.500.1-39.300-17.100-76-48.300-103.300zM472 732a40 40 0 1 0 80 0 40 40 0 1 0-80 0z"/>
</g>
<!-- select box -->
<rect x="2253" y="35" width="398" height="62" rx="4" fill="none" stroke="#777" stroke-width="2"/>
<path d="M2610.600 61.200 L2618.200 70.800 L2625.800 61.200" fill="none" stroke="#161616" stroke-width="2.1"/>
<!-- avatar -->
<clipPath id="av"><circle cx="2748" cy="71.400" r="32"/></clipPath>
<filter id="avb" x="-10%" y="-10%" width="120%" height="120%"><feGaussianBlur stdDeviation="0.9"/></filter>
<g clip-path="url(#av)"><g filter="url(#avb)">
 <rect x="2710" y="34" width="76" height="76" fill="#8d8e8e"/>
 <path d="M2712 66 L2716 58 L2721 53.500 L2726 56 L2734 57 L2734 66 Z" fill="#5f6a78"/>
 <path d="M2758 54 L2764 52.500 L2772 52.800 L2777 55 L2782 60.500 L2758 60.500 Z" fill="#666d7c"/>
 <rect x="2712" y="60" width="24" height="5" fill="#5a6670"/>
 <rect x="2712" y="65" width="72" height="8" fill="#8a8f91"/>
 <path d="M2712 72 L2722 71 L2730 72.500 L2740 73 L2740 84 L2712 84 Z" fill="#434e45"/>
 <path d="M2758 74 L2766 72 L2772 69 L2778 67.500 L2784 68 L2784 90 L2758 90 Z" fill="#3f4b40"/>
 <path d="M2712 78 L2736 77.500 L2740 82 L2738 92 L2712 96 Z" fill="#75726e"/>
 <path d="M2722 104 C2722 92 2728 87 2740 84.500 L2748 88 L2760 80.500 C2772 82 2777 86 2778 104 Z" fill="#5c5654"/>
 <path d="M2740.500 80 L2759 79 L2759.500 86 L2751 95.500 L2741 87 Z" fill="#6f574c"/>
 <ellipse cx="2748.600" cy="68.500" rx="11.600" ry="14.600" fill="#7b6053"/>
 <path d="M2733 66 C2730.500 56 2731.500 48 2736 44.500 C2740 41 2746 40.500 2751 41.200 C2756 41.600 2759.500 45.500 2760 52 C2760.300 56 2760 59 2759.500 61 C2757 55.500 2750 53.500 2744 54.500 C2740 55.500 2738.500 58 2738 62 C2737.500 65 2736.500 67.500 2735.500 69 Z" fill="#3a2e29"/>
 <path d="M2745.800 74.200 Q2751 75.400 2755.600 73.600 Q2753.500 78.600 2749.500 78.200 Q2746.800 77.600 2745.800 74.200 Z" fill="#b3a7a2"/>
 <path d="M2741 62.400 L2746.500 62 M2752 61.500 L2757 61" stroke="#3e302a" stroke-width="1.600" fill="none"/>
</g></g>
<path d="M2791.800 62 L2804.800 78.600 L2817.800 62" fill="none" stroke="#161616" stroke-width="3"/>
<!-- link-off icons -->
<g id="lk" fill="none" stroke="#737373" stroke-width="5" stroke-linecap="butt">
 <rect x="1826" y="940.400" width="56" height="25" rx="12.500" transform="rotate(-44.700 1854 952.900)"/>
 <path d="M1835.600 934.400 L1872.800 971.600" stroke="#8c8c8c" stroke-width="13"/>
 <path d="M1835.600 934.400 L1872.800 971.600"/>
</g>
<use href="#lk" x="460" y="0"/>
<!-- app store / google play logos -->
<g fill="#8c8c8c" transform="translate(2244.6,755.4) scale(0.91) translate(-2240.2,-752)">
 <path d="M2267.200 773.600c0-5 4.100-7.400 4.300-7.500-2.300-3.400-6-3.900-7.300-3.900-3.100-.3-6 1.800-7.600 1.800-1.600 0-4-1.800-6.500-1.700-3.300.1-6.400 2-8.100 4.900-3.500 6-0.900 15 2.500 19.900 1.700 2.400 3.700 5.100 6.300 5 2.500-.1 3.500-1.600 6.500-1.600s3.900 1.600 6.500 1.600c2.700 0 4.400-2.400 6.100-4.800 1.900-2.800 2.700-5.500 2.800-5.600-.1-.1-5.400-2.100-5.500-8.100z"/>
 <path d="M2262.300 758.900c1.400-1.700 2.300-4 2-6.400-2 .1-4.400 1.400-5.900 3-1.300 1.500-2.400 3.900-2.100 6.200 2.300.2 4.600-1.100 6-2.800z"/>
</g>
<g>
 <path d="M2565 752.500 L2565 794.500 L2586.500 773.500 Z" fill="#3d7f95"/>
 <path d="M2565 752.500 L2586.500 773.500 L2593 767.200 Z" fill="#4f8f62"/>
 <path d="M2565 794.500 L2586.500 773.500 L2593 779.800 Z" fill="#8a3a3e"/>
 <path d="M2593 767.200 L2586.500 773.500 L2593 779.800 L2599 775.400 Q2601 773.500 2599 771.600 Z" fill="#96803a"/>
</g>
</svg>

<span class="t" style="left:88.23px;top:40.60px;font-size:60px;letter-spacing:0.000px;color:#2d3136;-webkit-text-stroke:1.0px #2d3136;transform:scaleX(1.0927);transform-origin:0 0;">Nesto</span>
<span class="t" style="left:37.35px;top:168.00px;font-size:29px;letter-spacing:0.238px;color:#161616;-webkit-text-stroke:0.3px #161616;">Erfasste Arbeitszeiten</span>
<span class="t" style="left:39.35px;top:264.00px;font-size:29px;letter-spacing:0.139px;color:#161616;-webkit-text-stroke:0.3px #161616;">Auswertung</span>
<span class="t" style="left:37.35px;top:360.00px;font-size:29px;letter-spacing:0.500px;color:#161616;-webkit-text-stroke:0.3px #161616;">Mitarbeiter</span>
<span class="t" style="left:22.60px;top:456.00px;font-size:29px;letter-spacing:0.056px;color:#161616;-webkit-text-stroke:0.3px #161616;">Stammdaten</span>
<span class="t" style="left:21.60px;top:552.00px;font-size:29px;letter-spacing:-0.091px;color:#161616;-webkit-text-stroke:0.3px #161616;">Personalakte</span>
<span class="t" style="left:21.60px;top:648.00px;font-size:29px;letter-spacing:0.267px;color:#161616;-webkit-text-stroke:0.3px #161616;">Urlaubsübersicht</span>
<span class="t" style="left:21.60px;top:744.00px;font-size:29px;letter-spacing:0.068px;color:#161616;-webkit-text-stroke:0.3px #161616;">Urlaubsabbau</span>
<span class="t" style="left:23.60px;top:840.00px;font-size:29px;letter-spacing:-0.080px;color:#161616;-webkit-text-stroke:0.3px #161616;">Archiv</span>
<span class="t" style="left:37.60px;top:936.00px;font-size:29px;letter-spacing:0.286px;color:#161616;-webkit-text-stroke:0.3px #161616;">My Nesto</span>
<span class="t" style="left:37.60px;top:1032.00px;font-size:29px;letter-spacing:0.115px;color:#161616;-webkit-text-stroke:0.3px #161616;">Lohnabrechnung</span>
<span class="t" style="left:37.60px;top:1128.00px;font-size:29px;letter-spacing:0.080px;color:#161616;-webkit-text-stroke:0.3px #161616;">Export</span>
<span class="t" style="left:37.60px;top:1224.00px;font-size:29px;letter-spacing:0.050px;color:#2a646c;-webkit-text-stroke:0.3px #2a646c;">Einstellungen</span>
<span class="t" style="left:21.20px;top:1320.00px;font-size:29px;letter-spacing:-0.095px;color:#2a646c;-webkit-text-stroke:0.3px #2a646c;">Lokale Einstellungen</span>
<span class="t" style="left:22.20px;top:1416.00px;font-size:29px;letter-spacing:-0.080px;color:#161616;-webkit-text-stroke:0.3px #161616;">Globale Einstellungen</span>
<span class="t" style="left:22.20px;top:1512.00px;font-size:29px;letter-spacing:0.043px;color:#3b1a78;font-weight:700;font-style:italic;">Nestoweite Einstellungen</span>
<span class="t" style="left:2055.35px;top:55.50px;font-size:29px;letter-spacing:0.321px;color:#161616;-webkit-text-stroke:0.3px #161616;">Handbuch</span>
<span class="t" style="left:2283.60px;top:52.25px;font-size:29px;letter-spacing:0.062px;color:#161616;-webkit-text-stroke:0.3px #161616;">Karlsruhe</span>
<span class="t" style="left:543.60px;top:193.25px;font-size:33px;letter-spacing:-0.038px;color:#161616;-webkit-text-stroke:0.9px #161616;">Lokale Einstellungen für Karlsruhe</span>
<span class="t" style="left:573.60px;top:346.00px;font-size:29px;letter-spacing:0.344px;color:#161616;-webkit-text-stroke:0.9px #161616;">Allgemein</span>
<span class="t" style="left:571.60px;top:448.00px;font-size:29px;letter-spacing:0.375px;color:#161616;-webkit-text-stroke:0.9px #161616;">Planung</span>
<span class="t" style="left:573.60px;top:550.00px;font-size:29px;letter-spacing:0.320px;color:#161616;-webkit-text-stroke:0.9px #161616;">Automatischer Dienstplan</span>
<span class="t" style="left:573.60px;top:652.00px;font-size:29px;letter-spacing:0.583px;color:#161616;-webkit-text-stroke:0.9px #161616;">Zeiterfassung</span>
<span class="t" style="left:571.60px;top:754.00px;font-size:29px;letter-spacing:0.635px;color:#161616;-webkit-text-stroke:0.9px #161616;">Benachrichtigungen</span>
<span class="t" style="left:571.60px;top:856.00px;font-size:29px;letter-spacing:0.648px;color:#161616;-webkit-text-stroke:0.9px #161616;">My Nesto App (Mitarbeiter-App)</span>
<span class="t" style="left:571.60px;top:958.00px;font-size:29px;letter-spacing:0.492px;color:#161616;-webkit-text-stroke:0.9px #161616;">Lohnabrechnung</span>
<span class="t" style="left:572.10px;top:1060.00px;font-size:29px;letter-spacing:0.307px;color:#3b1a78;font-weight:700;font-style:italic;">Nesto-Konfiguration (intern)</span>
<span class="t" style="left:1585.05px;top:536.00px;font-size:29px;letter-spacing:0.150px;color:#161616;-webkit-text-stroke:0.3px #161616;">Bitte laden Sie die Nesto Ze</span><span class="t" style="left:1948.10px;top:536.00px;font-size:29px;letter-spacing:0.417px;color:#161616;-webkit-text-stroke:0.3px #161616;">iterfassungs-</span>
<span class="t" style="left:1460.65px;top:579.75px;font-size:29px;letter-spacing:0.150px;color:#161616;-webkit-text-stroke:0.3px #161616;">App herunter und scannen Sie den Q</span><span class="t" style="left:1944.10px;top:579.75px;font-size:29px;letter-spacing:-0.300px;color:#161616;-webkit-text-stroke:0.3px #161616;">R-Code</span>
<span class="t" style="left:1395.75px;top:623.50px;font-size:29px;letter-spacing:0.150px;color:#161616;-webkit-text-stroke:0.3px #161616;">mit dem Gerät, das Sie verwenden möchten</span>
<span class="t" style="left:1481.30px;top:667.75px;font-size:29px;letter-spacing:0.150px;color:#161616;-webkit-text-stroke:0.3px #161616;">Danach können Sie dem Gerät dann </span><span class="t" style="left:1962.10px;top:667.75px;font-size:29px;letter-spacing:-0.300px;color:#161616;-webkit-text-stroke:0.3px #161616;">einen Namen</span>
<span class="t" style="left:1630.30px;top:711.50px;font-size:29px;letter-spacing:0.150px;color:#161616;-webkit-text-stroke:0.3px #161616;">geben und den Standort </span><span class="t" style="left:1953.35px;top:711.50px;font-size:29px;letter-spacing:0.219px;color:#161616;-webkit-text-stroke:0.3px #161616;">eingeben.</span>
<span class="t" style="left:1591.60px;top:939.00px;font-size:33px;letter-spacing:0.167px;color:#161616;-webkit-text-stroke:0.9px #161616;">Browser</span>
<span class="t" style="left:2051.60px;top:939.00px;font-size:33px;letter-spacing:0.062px;color:#161616;-webkit-text-stroke:0.9px #161616;">Browser Safari</span>
<span class="t" style="left:1591.00px;top:1163.00px;font-size:29px;letter-spacing:0.365px;color:#161616;-webkit-text-stroke:0.3px #161616;">Letzte Verbindung:</span>
<span class="t" style="left:1593.00px;top:1235.00px;font-size:29px;letter-spacing:0.192px;color:#161616;-webkit-text-stroke:0.3px #161616;">vor 4 Minuten</span>
<span class="t" style="left:2051.20px;top:1163.00px;font-size:29px;letter-spacing:0.371px;color:#161616;-webkit-text-stroke:0.3px #161616;">Letzte Verbindung:</span>
<span class="t" style="left:2053.20px;top:1235.00px;font-size:29px;letter-spacing:0.075px;color:#161616;-webkit-text-stroke:0.3px #161616;">vor 2 Monaten</span>
<span class="t" style="left:2286.20px;top:753.80px;font-size:13px;letter-spacing:0.000px;color:#8c8c8c;-webkit-text-stroke:0.3px #8c8c8c;transform:scaleX(1.2038);transform-origin:0 0;">Laden im</span>
<span class="t" style="left:2286.60px;top:768.00px;font-size:27px;letter-spacing:0.000px;color:#8c8c8c;-webkit-text-stroke:0.6px #8c8c8c;transform:scaleX(1.0504);transform-origin:0 0;">App Store</span>
<span class="t" style="left:2611.60px;top:752.00px;font-size:13px;letter-spacing:0.000px;color:#8c8c8c;-webkit-text-stroke:0.3px #8c8c8c;transform:scaleX(0.8597);transform-origin:0 0;">JETZT BEI</span>
<span class="t" style="left:2610.09px;top:767.00px;font-size:28px;letter-spacing:0.000px;color:#8c8c8c;-webkit-text-stroke:0.5px #8c8c8c;transform:scaleX(0.8086);transform-origin:0 0;">Google Play</span>


<!-- modal -->
<div class="a" id="modal"></div>
<div class="a" style="left:908px;top:314px;width:1040px;height:2px;background:#f0f0f0"></div>
<div class="a" style="left:908px;top:742px;width:1040px;height:2px;background:#f0f0f0"></div>
<div class="a" style="left:956px;top:364px;width:944px;height:168px;background:#dceeee;border:2px solid #7fcbca;border-radius:4px"></div>
<div class="a" style="left:1347px;top:582px;width:553px;height:64px;background:#fff;border:2px solid #d9d9d9;border-radius:4px"></div>
<div class="a" style="left:1595px;top:764px;width:205px;height:64px;background:#fff;border:2px solid #d9d9d9;border-radius:4px;box-shadow:0 4px 0 rgba(0,0,0,.016)"></div>
<div class="a" style="left:1816px;top:764px;width:100px;height:64px;background:#f5f5f5;border:2px solid #d9d9d9;border-radius:4px"></div>
<svg width="2894" height="1660" viewBox="0 0 2894 1660">
 <path d="M1880.800 250.800 L1903.200 273.600 M1903.200 250.800 L1880.800 273.600" fill="none" stroke="#8c8c8c" stroke-width="2.600"/>
</svg>
<span class="t" style="left:956.50px;top:244.00px;font-size:33px;letter-spacing:0.056px;color:#262626;-webkit-text-stroke:0.9px #262626;">Standort des neuen Gerätes</span>
<span class="t" style="left:987.35px;top:389.75px;font-size:29px;letter-spacing:-0.032px;color:#262626;-webkit-text-stroke:0.3px #262626;">Um mehrere Geräte unterscheiden zu können, wird für jedes Gerät</span>
<span class="t" style="left:988.35px;top:433.50px;font-size:29px;letter-spacing:-0.013px;color:#262626;-webkit-text-stroke:0.3px #262626;">ein Name angegeben. Dieser ist üblicherweise der Standort des</span>
<span class="t" style="left:988.35px;top:477.50px;font-size:29px;letter-spacing:-0.245px;color:#262626;-webkit-text-stroke:0.3px #262626;">Geräts, z. B. Kasse oder Küche.</span>
<span class="t" style="left:956.60px;top:600.00px;font-size:29px;letter-spacing:-0.040px;color:#262626;-webkit-text-stroke:0.3px #262626;">Standort des neuen Gerätes</span><span class="t" style="left:1322.60px;top:600.00px;font-size:29px;letter-spacing:0.150px;color:#262626;-webkit-text-stroke:0.3px #262626;">:</span>
<span class="t" style="left:1371.35px;top:600.00px;font-size:29px;letter-spacing:0.000px;color:#bfbfbf;-webkit-text-stroke:0.3px #bfbfbf;">Standort des Gerätes</span>
<span class="t" style="left:1627.60px;top:781.75px;font-size:29px;letter-spacing:0.125px;color:#262626;-webkit-text-stroke:0.3px #262626;">Abbrechen</span>
<span class="t" style="left:1847.47px;top:781.75px;font-size:29px;letter-spacing:0.000px;color:#b8b8b8;-webkit-text-stroke:0.3px #b8b8b8;">Ok</span>

</div></body>
</html>
